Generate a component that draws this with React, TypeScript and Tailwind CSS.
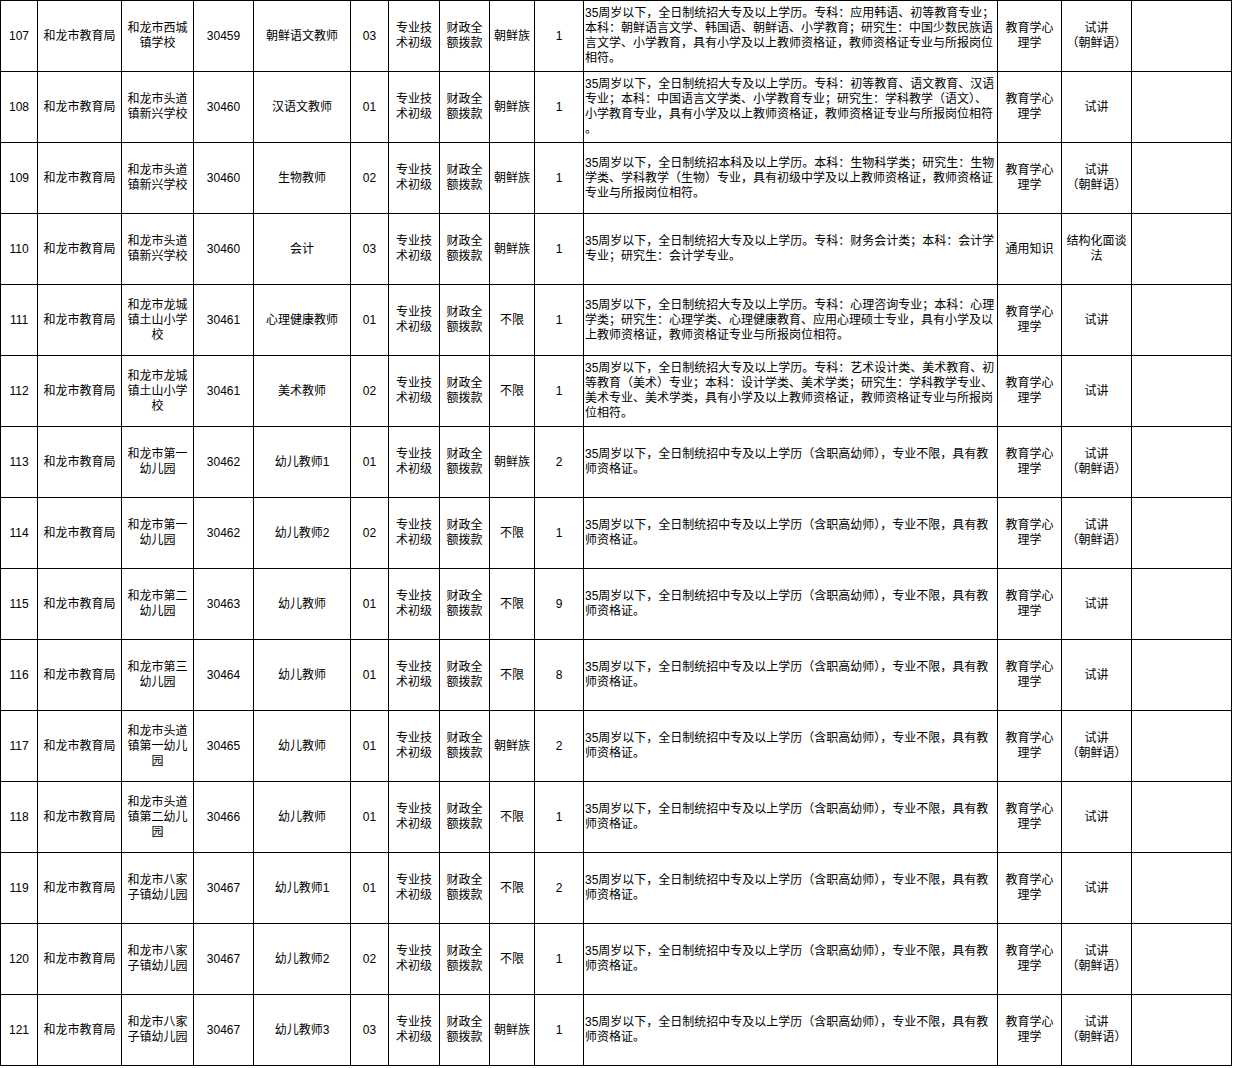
import React from "react";

type Row = {
  no: string;
  unit: string[];
  code: string;
  post: string;
  pno: string;
  eth: string;
  num: string;
  desc: string[];
  exam: string[];
  interview: string[];
};

const DESC_K = [
  "35周岁以下，全日制统招中专及以上学历（含职高幼师），专业不限，具有教",
  "师资格证。",
];
const EDU = ["教育学心", "理学"];
const SJ = ["试讲"];
const SJC = ["试讲", "（朝鲜语）"];

const rows: Row[] = [
  {
    no: "107",
    unit: ["和龙市西城", "镇学校"],
    code: "30459",
    post: "朝鲜语文教师",
    pno: "03",
    eth: "朝鲜族",
    num: "1",
    desc: [
      "35周岁以下，全日制统招大专及以上学历。专科：应用韩语、初等教育专业；",
      "本科：朝鲜语言文学、韩国语、朝鲜语、小学教育；研究生：中国少数民族语",
      "言文学、小学教育，具有小学及以上教师资格证，教师资格证专业与所报岗位",
      "相符。",
    ],
    exam: EDU,
    interview: SJC,
  },
  {
    no: "108",
    unit: ["和龙市头道", "镇新兴学校"],
    code: "30460",
    post: "汉语文教师",
    pno: "01",
    eth: "朝鲜族",
    num: "1",
    desc: [
      "35周岁以下，全日制统招大专及以上学历。专科：初等教育、语文教育、汉语",
      "专业；本科：中国语言文学类、小学教育专业；研究生：学科教学（语文）、",
      "小学教育专业，具有小学及以上教师资格证，教师资格证专业与所报岗位相符",
      "。",
    ],
    exam: EDU,
    interview: SJ,
  },
  {
    no: "109",
    unit: ["和龙市头道", "镇新兴学校"],
    code: "30460",
    post: "生物教师",
    pno: "02",
    eth: "朝鲜族",
    num: "1",
    desc: [
      "35周岁以下，全日制统招本科及以上学历。本科：生物科学类；研究生：生物",
      "学类、学科教学（生物）专业，具有初级中学及以上教师资格证，教师资格证",
      "专业与所报岗位相符。",
    ],
    exam: EDU,
    interview: SJC,
  },
  {
    no: "110",
    unit: ["和龙市头道", "镇新兴学校"],
    code: "30460",
    post: "会计",
    pno: "03",
    eth: "朝鲜族",
    num: "1",
    desc: [
      "35周岁以下，全日制统招大专及以上学历。专科：财务会计类；本科：会计学",
      "专业；研究生：会计学专业。",
    ],
    exam: ["通用知识"],
    interview: ["结构化面谈", "法"],
  },
  {
    no: "111",
    unit: ["和龙市龙城", "镇土山小学", "校"],
    code: "30461",
    post: "心理健康教师",
    pno: "01",
    eth: "不限",
    num: "1",
    desc: [
      "35周岁以下，全日制统招大专及以上学历。专科：心理咨询专业；本科：心理",
      "学类；研究生：心理学类、心理健康教育、应用心理硕士专业，具有小学及以",
      "上教师资格证，教师资格证专业与所报岗位相符。",
    ],
    exam: EDU,
    interview: SJ,
  },
  {
    no: "112",
    unit: ["和龙市龙城", "镇土山小学", "校"],
    code: "30461",
    post: "美术教师",
    pno: "02",
    eth: "不限",
    num: "1",
    desc: [
      "35周岁以下，全日制统招大专及以上学历。专科：艺术设计类、美术教育、初",
      "等教育（美术）专业；本科：设计学类、美术学类；研究生：学科教学专业、",
      "美术专业、美术学类，具有小学及以上教师资格证，教师资格证专业与所报岗",
      "位相符。",
    ],
    exam: EDU,
    interview: SJ,
  },
  { no: "113", unit: ["和龙市第一", "幼儿园"], code: "30462", post: "幼儿教师1", pno: "01", eth: "朝鲜族", num: "2", desc: DESC_K, exam: EDU, interview: SJC },
  { no: "114", unit: ["和龙市第一", "幼儿园"], code: "30462", post: "幼儿教师2", pno: "02", eth: "不限", num: "1", desc: DESC_K, exam: EDU, interview: SJC },
  { no: "115", unit: ["和龙市第二", "幼儿园"], code: "30463", post: "幼儿教师", pno: "01", eth: "不限", num: "9", desc: DESC_K, exam: EDU, interview: SJ },
  { no: "116", unit: ["和龙市第三", "幼儿园"], code: "30464", post: "幼儿教师", pno: "01", eth: "不限", num: "8", desc: DESC_K, exam: EDU, interview: SJ },
  { no: "117", unit: ["和龙市头道", "镇第一幼儿", "园"], code: "30465", post: "幼儿教师", pno: "01", eth: "朝鲜族", num: "2", desc: DESC_K, exam: EDU, interview: SJC },
  { no: "118", unit: ["和龙市头道", "镇第二幼儿", "园"], code: "30466", post: "幼儿教师", pno: "01", eth: "不限", num: "1", desc: DESC_K, exam: EDU, interview: SJ },
  { no: "119", unit: ["和龙市八家", "子镇幼儿园"], code: "30467", post: "幼儿教师1", pno: "01", eth: "不限", num: "2", desc: DESC_K, exam: EDU, interview: SJ },
  { no: "120", unit: ["和龙市八家", "子镇幼儿园"], code: "30467", post: "幼儿教师2", pno: "02", eth: "不限", num: "1", desc: DESC_K, exam: EDU, interview: SJC },
  { no: "121", unit: ["和龙市八家", "子镇幼儿园"], code: "30467", post: "幼儿教师3", pno: "03", eth: "朝鲜族", num: "1", desc: DESC_K, exam: EDU, interview: SJC },
];

function C({ lines }: { lines: string[] }) {
  return (
    <div className="bg-white flex flex-col items-center justify-center text-center">
      {lines.map((l, i) => (
        <div key={i} className="whitespace-nowrap">
          {l}
        </div>
      ))}
    </div>
  );
}

export default function App() {
  return (
    <div className="bg-white min-h-[1068px]">
      <div
        className="inline-grid grid-cols-[36px_83px_71px_59px_96px_37px_50px_49px_44px_48px_413px_63px_69px_99px] auto-rows-[70px] gap-px p-px bg-black text-black text-[12px] leading-[15px]"
        style={{ fontFamily: '"Liberation Sans", "Noto Sans CJK SC", sans-serif' }}
      >
        {rows.map((r) => (
          <React.Fragment key={r.no}>
            <C lines={[r.no]} />
            <C lines={["和龙市教育局"]} />
            <C lines={r.unit} />
            <C lines={[r.code]} />
            <C lines={[r.post]} />
            <C lines={[r.pno]} />
            <C lines={["专业技", "术初级"]} />
            <C lines={["财政全", "额拨款"]} />
            <C lines={[r.eth]} />
            <C lines={[r.num]} />
            <div className="bg-white flex flex-col justify-center pl-px">
              {r.desc.map((l, i) => (
                <div key={i} className="whitespace-nowrap">
                  {l}
                </div>
              ))}
            </div>
            <C lines={r.exam} />
            <C lines={r.interview} />
            <div className="bg-white" />
          </React.Fragment>
        ))}
      </div>
    </div>
  );
}
